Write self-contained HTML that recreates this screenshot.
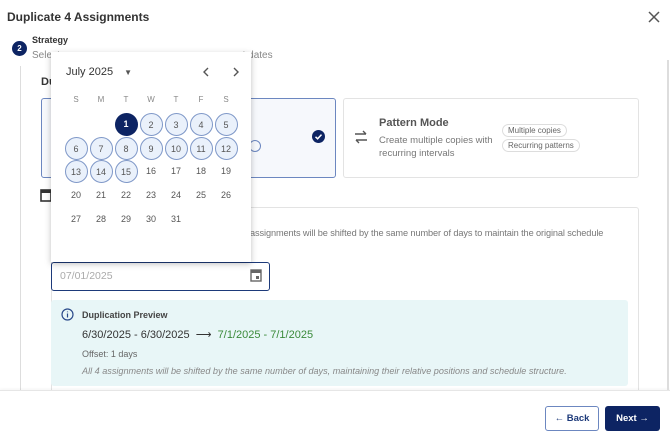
<!DOCTYPE html>
<html><head><style>
*{box-sizing:border-box;margin:0;padding:0}
body{width:670px;height:436px;overflow:hidden;background:#fff;font-family:"Liberation Sans",sans-serif;position:relative;color:#333}
.a{position:absolute}
.day{position:absolute;width:23px;height:23px;border-radius:50%;font-size:9px;text-align:center;line-height:23px;color:#555}
.h{border:1px solid #7f98c8;background:#eaf1fb}
.chip{position:absolute;font-size:8px;color:#666;border:1px solid #ddd;border-radius:9px;padding:1px 5px}
</style></head><body>
<div class="a" style="left:7px;top:10px;font-size:12px;font-weight:bold;color:#333">Duplicate 4 Assignments</div>
<svg class="a" style="left:648px;top:11px" width="12" height="12"><path d="M1 1L11 11M11 1L1 11" stroke="#555" stroke-width="1.5"/></svg>
<div class="a" style="left:12px;top:41px;width:15px;height:15px;border-radius:50%;background:#0d2463;color:#fff;font-size:8px;font-weight:bold;text-align:center;line-height:15px">2</div>
<div class="a" style="left:32px;top:35px;font-size:9px;font-weight:bold;color:#333">Strategy</div>
<div class="a" style="left:32px;top:50px;font-size:10px;color:#888">Select <span style="margin-left:180px">t dates</span></div>
<div class="a" style="left:20px;top:66px;width:1px;height:325px;background:#ddd"></div>
<div class="a" style="left:41px;top:76px;font-size:11px;font-weight:bold;color:#333">Du</div>
<div class="a" style="left:41px;top:98px;width:295px;height:80px;border:1px solid #6c87c0;border-radius:3px;background:#f6f8fc"></div>
<div class="a" style="left:249px;top:140px;width:12px;height:12px;border:1px solid #6c87c0;border-radius:6px"></div>
<svg class="a" style="left:312px;top:130px" width="13" height="13"><circle cx="6.5" cy="6.5" r="6.5" fill="#0d2463"/><path d="M3.5 6.8L5.6 8.8L9.5 4.6" stroke="#fff" stroke-width="1.5" fill="none"/></svg>
<div class="a" style="left:343px;top:98px;width:296px;height:80px;border:1px solid #e3e3e3;border-radius:3px"></div>
<svg class="a" style="left:354px;top:130px" width="14" height="14"><path d="M1 4H12M9 1L12 4M13 10H2M5 13L2 10" stroke="#555" stroke-width="1.4" fill="none"/></svg>
<div class="a" style="left:379px;top:117px;font-size:11px;font-weight:bold;color:#555">Pattern Mode</div>
<div class="a" style="left:379px;top:135px;font-size:9.5px;color:#777;line-height:12.5px">Create multiple copies with<br>recurring intervals</div>
<div class="chip" style="left:502px;top:124px">Multiple copies</div>
<div class="chip" style="left:502px;top:139px">Recurring patterns</div>
<svg class="a" style="left:40px;top:188px" width="12" height="14"><rect x="1" y="2" width="10" height="11" fill="none" stroke="#333" stroke-width="1.6"/><rect x="1" y="2" width="10" height="3" fill="#333"/></svg>
<div class="a" style="left:51px;top:207px;width:588px;height:190px;border:1px solid #e3e3e3;border-radius:3px"></div>
<div class="a" style="left:250px;top:228px;font-size:9.2px;color:#777;letter-spacing:-0.1px">assignments will be shifted by the same number of days to maintain the original schedule</div>
<div class="a" style="left:51px;top:262px;width:219px;height:29px;border:1px solid #1d3a7a;border-radius:3px"></div>
<div class="a" style="left:60px;top:270px;font-size:10.5px;color:#aaa">07/01/2025</div>
<svg class="a" style="left:250px;top:268px" width="12" height="14"><rect x="1" y="2" width="10" height="11" fill="none" stroke="#666" stroke-width="1.4"/><rect x="1" y="2" width="10" height="3" fill="#666"/><rect x="6" y="8" width="3" height="3" fill="#666"/></svg>
<div class="a" style="left:51px;top:300px;width:577px;height:86px;background:#e8f6f7;border-radius:3px"></div>
<svg class="a" style="left:61px;top:308px" width="13" height="13"><circle cx="6.5" cy="6.5" r="5.5" fill="none" stroke="#2a4a8a" stroke-width="1.2"/><path d="M6.5 5.5V9.5M6.5 3.5V4.3" stroke="#2a4a8a" stroke-width="1.2"/></svg>
<div class="a" style="left:82px;top:310px;font-size:9px;font-weight:bold;color:#444">Duplication Preview</div>
<div class="a" style="left:82px;top:328px;font-size:11px;color:#333">6/30/2025 - 6/30/2025 &nbsp;⟶&nbsp; <span style="color:#3a8a3a">7/1/2025 - 7/1/2025</span></div>
<div class="a" style="left:82px;top:349px;font-size:9px;color:#666">Offset: 1 days</div>
<div class="a" style="left:82px;top:366px;font-size:9.1px;color:#888;font-style:italic">All 4 assignments will be shifted by the same number of days, maintaining their relative positions and schedule structure.</div>
<div class="a" style="left:0;top:390px;width:670px;height:46px;background:#fff;border-top:1px solid #e6e6e6;box-shadow:0 -1px 3px rgba(0,0,0,.05)"></div>
<div class="a" style="left:545px;top:406px;width:54px;height:25px;border:1px solid #6c87c0;border-radius:3px;font-size:9.5px;font-weight:bold;color:#1d3a7a;text-align:center;line-height:23px">← Back</div>
<div class="a" style="left:605px;top:406px;width:55px;height:25px;background:#0d2463;border-radius:3px;font-size:9.5px;font-weight:bold;color:#fff;text-align:center;line-height:25px">Next →</div>
<div class="a" style="left:667px;top:60px;width:2px;height:330px;background:#ddd"></div>
<div class="a" style="left:51px;top:52px;width:200px;height:210px;background:#fff;box-shadow:0 2px 6px rgba(0,0,0,.25)">
<div class="a" style="left:15px;top:14px;font-size:11px;color:#333">July 2025 <span style="font-size:8px;margin-left:8px;color:#555">▼</span></div>
<svg class="a" style="left:150px;top:15px" width="40" height="10"><path d="M7 1L3 5L7 9M33 1L37 5L33 9" stroke="#555" stroke-width="1.4" fill="none"/></svg>
</div>
<div id="cal"></div>
<script>
var c=document.getElementById('cal'),h='',xs=[76,101,126,151,176,201,226],L=['S','M','T','W','T','F','S'];
for(var i=0;i<7;i++)h+='<div class="day" style="left:'+(xs[i]-11.5)+'px;top:'+(99-11.5)+'px;font-size:8px;color:#888">'+L[i]+'</div>';
var ys=[124,148,171,195,219];
for(var d=1;d<=31;d++){var p=d+1,r=Math.floor(p/7),col=p%7,cls='day';var st='';
if(d==1)st='background:#0d2463;color:#fff;font-weight:bold;';else if(d<=15)cls+=' h';
h+='<div class="'+cls+'" style="left:'+(xs[col]-11.5)+'px;top:'+(ys[r]-11.5)+'px;'+st+'">'+d+'</div>';}
c.innerHTML=h;
</script>
</body></html>
